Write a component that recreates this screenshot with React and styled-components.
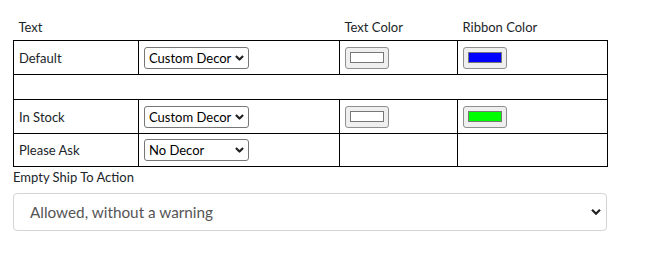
import React from "react";
import styled, { createGlobalStyle } from "styled-components";

const Global = createGlobalStyle`
  html, body { margin: 0; padding: 0; background: #fff; }
  body { font-family: Lato, "Open Sans", sans-serif; color: #212529; }
`;

const Page = styled.div`
  padding: 8px 13px;
  width: 594px;
`;

const Grid = styled.table`
  border-collapse: collapse;
  table-layout: fixed;
  width: 594px;
  font-size: 13px;
`;

const HeadCell = styled.th`
  text-align: left;
  font-weight: 400;
  padding: 10px 5px 4px;
  height: 18px;
  line-height: 18px;
`;

const Cell = styled.td`
  border: 1px solid #000;
  padding: 0 5px;
  height: ${(p) => p.$h}px;
  vertical-align: middle;
`;

const SelectWrap = styled.div`
  position: relative;
  display: inline-block;
  width: 105px;
  height: 22px;
`;

const SmallSelect = styled.select`
  appearance: none;
  -webkit-appearance: none;
  width: 105px;
  height: 22px;
  box-sizing: border-box;
  border: 1px solid #767676;
  border-radius: 3px;
  background: #fff;
  font: inherit;
  font-size: 13px;
  color: #000;
  padding: 0 0 0 4px;
  margin: 0;
  display: block;
`;

const Chevron = styled.svg`
  position: absolute;
  right: ${(p) => p.$r}px;
  top: 50%;
  transform: translateY(-50%);
  pointer-events: none;
`;

const ColorButton = styled.div`
  width: 44px;
  height: 22px;
  box-sizing: border-box;
  border: 1px solid #8f8f8f;
  border-radius: 3px;
  background: #efefef;
  display: flex;
  align-items: center;
  justify-content: center;
`;

const Swatch = styled.div`
  width: 34px;
  height: 11px;
  box-sizing: border-box;
  border: 1px solid #777;
  background: ${(p) => p.$c};
`;

const Label = styled.div`
  font-size: 13px;
  line-height: 18px;
  margin-top: 1px;
`;

const BigWrap = styled.div`
  position: relative;
  margin-top: 7px;
  width: 594px;
`;

const BigSelect = styled.select`
  appearance: none;
  -webkit-appearance: none;
  width: 594px;
  height: 38px;
  box-sizing: border-box;
  border: 1px solid #d4d4d4;
  border-radius: 4px;
  background: #fff;
  font: inherit;
  font-size: 15.3px;
  color: #555;
  padding: 0 0 0 16px;
  display: block;
`;

const Chev = ({ r, w = 9, sw = 2.4 }) => (
  <Chevron $r={r} width={w} height={w * 0.7} viewBox="0 0 10 7">
    <path d="M1 1.2 L5 5.2 L9 1.2" fill="none" stroke="#222" strokeWidth={sw} />
  </Chevron>
);

const Decor = ({ value }) => (
  <SelectWrap>
    <SmallSelect defaultValue={value}>
      <option>Custom Decor</option>
      <option>No Decor</option>
    </SmallSelect>
    <Chev r={5} />
  </SelectWrap>
);

export default function App() {
  return (
    <Page>
      <Global />
      <Grid>
        <colgroup>
          <col style={{ width: 125 }} />
          <col style={{ width: 201 }} />
          <col style={{ width: 118 }} />
          <col style={{ width: 150 }} />
        </colgroup>
        <thead>
          <tr>
            <HeadCell>Text</HeadCell>
            <HeadCell />
            <HeadCell>Text Color</HeadCell>
            <HeadCell>Ribbon Color</HeadCell>
          </tr>
        </thead>
        <tbody>
          <tr>
            <Cell $h={33}>Default</Cell>
            <Cell $h={33}><Decor value="Custom Decor" /></Cell>
            <Cell $h={33}><ColorButton><Swatch $c="#fff" /></ColorButton></Cell>
            <Cell $h={33}><ColorButton><Swatch $c="#0000ff" /></ColorButton></Cell>
          </tr>
          <tr>
            <Cell $h={24} colSpan={4} />
          </tr>
          <tr>
            <Cell $h={33}>In Stock</Cell>
            <Cell $h={33}><Decor value="Custom Decor" /></Cell>
            <Cell $h={33}><ColorButton><Swatch $c="#fff" /></ColorButton></Cell>
            <Cell $h={33}><ColorButton><Swatch $c="#00ff00" /></ColorButton></Cell>
          </tr>
          <tr>
            <Cell $h={32}>Please Ask</Cell>
            <Cell $h={32}><Decor value="No Decor" /></Cell>
            <Cell $h={32} />
            <Cell $h={32} />
          </tr>
        </tbody>
      </Grid>
      <Label>Empty Ship To Action</Label>
      <BigWrap>
        <BigSelect defaultValue="a">
          <option value="a">Allowed, without a warning</option>
        </BigSelect>
        <Chev r={6} w={10} sw={2.2} />
      </BigWrap>
    </Page>
  );
}
